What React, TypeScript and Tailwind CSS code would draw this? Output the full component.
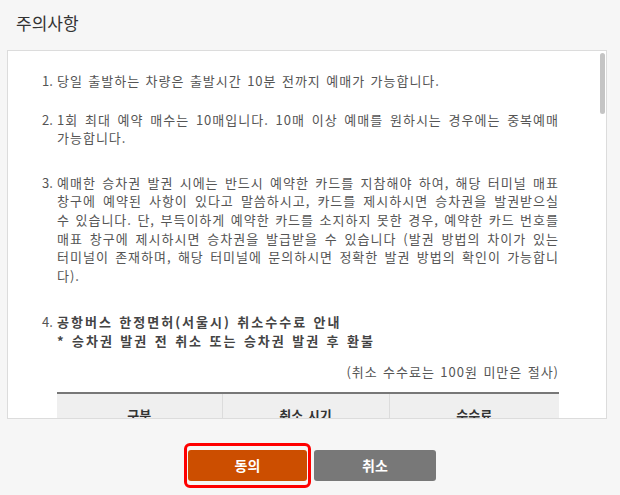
const font = "font-['Noto_Sans_CJK_KR','Noto_Sans',sans-serif]";

const fullLine = "text-justify [text-align-last:justify] whitespace-nowrap";

function Num({ children }: Readonly<{ children: string }>) {
  return <span className="w-[15px] shrink-0 tracking-normal">{children}</span>;
}

function Item({
  num,
  lines,
  className = "",
}: Readonly<{ num: string; lines: string[]; className?: string }>) {
  return (
    <li className={"flex " + className}>
      <Num>{num}</Num>
      <div className="flex-1">
        {lines.map((line, i) => (
          <div
            key={i}
            className={i < lines.length - 1 ? fullLine : "whitespace-nowrap"}
          >
            {line}
          </div>
        ))}
      </div>
    </li>
  );
}

export default function App() {
  return (
    <div className={"h-[495px] w-[620px] bg-[#f6f6f6] text-[#555] " + font}>
      <h2 className="px-[16px] pt-[11px] text-[17px] leading-[24px] text-[#333]">
        주의사항
      </h2>

      <div className="relative mx-[7px] mt-[15px] h-[369px] w-[600px] overflow-hidden border border-[#dcdcdc] bg-white">
        <ol className="pl-[34px] pr-[47px] pt-[21px] text-[13px] leading-[18.6px] tracking-[1px] [word-spacing:1.5px]">
          <Item
            num="1."
            lines={["당일 출발하는 차량은 출발시간 10분 전까지 예매가 가능합니다."]}
          />
          <Item
            num="2."
            className="mt-[20px]"
            lines={[
              "1회 최대 예약 매수는 10매입니다. 10매 이상 예매를 원하시는 경우에는 중복예매",
              "가능합니다.",
            ]}
          />
          <Item
            num="3."
            className="mt-[26px]"
            lines={[
              "예매한 승차권 발권 시에는 반드시 예약한 카드를 지참해야 하여, 해당 터미널 매표",
              "창구에 예약된 사항이 있다고 말씀하시고, 카드를 제시하시면 승차권을 발권받으실",
              "수 있습니다. 단, 부득이하게 예약한 카드를 소지하지 못한 경우, 예약한 카드 번호를",
              "매표 창구에 제시하시면 승차권을 발급받을 수 있습니다 (발권 방법의 차이가 있는",
              "터미널이 존재하며, 해당 터미널에 문의하시면 정확한 발권 방법의 확인이 가능합니",
              "다).",
            ]}
          />
          <li className="mt-[28px] flex">
            <Num>4.</Num>
            <div className="flex-1">
              <div className="font-bold tracking-[2px] text-[#444]">
                공항버스 한정면허(서울시) 취소수수료 안내
              </div>
              <div className="font-bold tracking-[2px] text-[#444]">
                * 승차권 발권 전 취소 또는 승차권 발권 후 환불
              </div>
              <div className="mt-[12px] text-right">
                (취소 수수료는 100원 미만은 절사)
              </div>
              <table className="mt-[11px] w-full border-t-2 border-[#777] text-[13px] tracking-normal">
                <thead>
                  <tr className="bg-[#efefef] text-[#333]">
                    <th className="w-[165px] border-r border-[#dcdcdc] py-[12px] font-bold">
                      구분
                    </th>
                    <th className="w-[167px] border-r border-[#dcdcdc] py-[12px] font-bold">
                      취소 시기
                    </th>
                    <th className="py-[12px] font-bold">수수료</th>
                  </tr>
                </thead>
              </table>
            </div>
          </li>
        </ol>

        <div className="absolute right-[1px] top-[2px] h-[61px] w-[5px] rounded-full bg-[#c4c4c4]" />
      </div>

      <div className="mt-[24px] flex items-center justify-center gap-[3px]">
        <div className="rounded-[6px] border-[3px] border-[#f00] px-[1px] py-[4px]">
          <button className="h-[31px] w-[119px] rounded-[3px] bg-[#cc4e00] text-[14px] font-bold text-white">
            동의
          </button>
        </div>
        <button className="h-[31px] w-[122px] rounded-[3px] bg-[#787878] text-[14px] font-bold text-white">
          취소
        </button>
      </div>
    </div>
  );
}
